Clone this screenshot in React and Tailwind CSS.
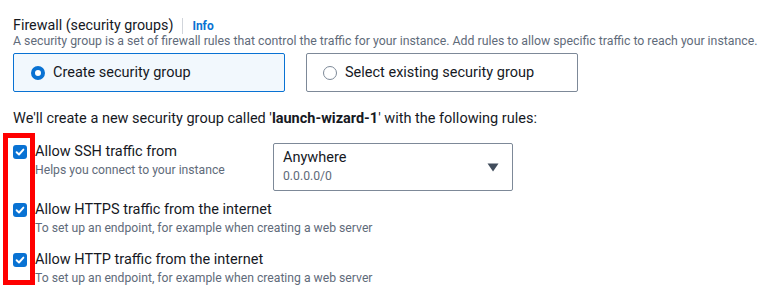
import React from 'react';

const font = { fontFamily: 'Roboto, "Liberation Sans", sans-serif' };

function Check() {
  return (
    <div className="w-[14px] h-[14px] rounded-[3px] bg-[#0972d3] flex items-center justify-center shrink-0">
      <svg width="10" height="10" viewBox="0 0 10 10" fill="none">
        <path d="M1.6 5.2 L4 7.5 L8.4 2.6" stroke="white" strokeWidth="1.9" strokeLinecap="round" strokeLinejoin="round" />
      </svg>
    </div>
  );
}

function Rule({ title, hint, className, children }) {
  return (
    <div className={`flex items-start ${className || ''}`}>
      <div className="w-[22px] pt-[2px] shrink-0">
        <Check />
      </div>
      <div className="w-[238px] shrink-0 whitespace-nowrap">
        <div className="text-[14.5px] leading-[18px] text-[#16191f]">{title}</div>
        <div className="text-[12.2px] leading-[18px] text-[#5f6b7a]">{hint}</div>
      </div>
      {children}
    </div>
  );
}

export default function App() {
  return (
    <div className="relative w-[764px] h-[300px] bg-white overflow-hidden pl-[13px] pt-[17px]" style={font}>
      {/* Header */}
      <div className="flex items-center h-[18px]">
        <span className="text-[14.3px] text-[#16191f]">Firewall (security groups)</span>
        <span className="w-px h-[16px] bg-[#d1d5db] mx-[9px]"></span>
        <span className="text-[12px] font-bold text-[#0972d3]">Info</span>
      </div>
      <div className="text-[12.3px] leading-[18px] text-[#5f6b7a] mt-[-3px] whitespace-nowrap">
        A security group is a set of firewall rules that control the traffic for your instance. Add rules to allow specific traffic to reach your instance.
      </div>

      {/* Choice cards */}
      <div className="flex gap-[21px] mt-[3px]">
        <div className="w-[272px] h-[39px] border border-[#0972d3] bg-[#f2f8fd] rounded-[2px] flex items-center pl-[17px] gap-[8px]">
          <span className="w-[14px] h-[14px] rounded-full border-[4px] border-[#0972d3] bg-white"></span>
          <span className="text-[14.5px] text-[#16191f]">Create security group</span>
        </div>
        <div className="w-[272px] h-[39px] border border-[#7d8998] rounded-[2px] flex items-center pl-[16px] gap-[8px]">
          <span className="w-[14px] h-[14px] rounded-full border border-[#7d8998] bg-white"></span>
          <span className="text-[14.5px] text-[#16191f]">Select existing security group</span>
        </div>
      </div>

      <div className="text-[14.5px] text-[#16191f] mt-[18px] leading-[18px] whitespace-nowrap">
        We'll create a new security group called '<b>launch-wizard-1</b>' with the following rules:
      </div>

      {/* Rules */}
      <div className="flex flex-col mt-[15px]">
        <Rule title="Allow SSH traffic from" hint="Helps you connect to your instance">
          <div className="w-[240px] h-[48px] border border-[#7d8998] rounded-[2px] flex items-center justify-between pl-[9px] pr-[13px] mt-[0px]">
            <div>
              <div className="text-[14.5px] leading-[18px] text-[#16191f]">Anywhere</div>
              <div className="text-[12.2px] leading-[18px] text-[#5f6b7a]">0.0.0.0/0</div>
            </div>
            <svg width="12" height="9" viewBox="0 0 12 9">
              <path d="M0.5 0.5 H11.5 L6 8.5 Z" fill="#414d5c" />
            </svg>
          </div>
        </Rule>
        <Rule className="mt-[10px]" title="Allow HTTPS traffic from the internet" hint="To set up an endpoint, for example when creating a web server" />
        <Rule className="mt-[14px]" title="Allow HTTP traffic from the internet" hint="To set up an endpoint, for example when creating a web server" />
      </div>

      {/* Annotation */}
      <div className="absolute left-[3px] top-[133px] w-[32px] h-[152px] border-[5px] border-[#ff0000]"></div>
    </div>
  );
}
